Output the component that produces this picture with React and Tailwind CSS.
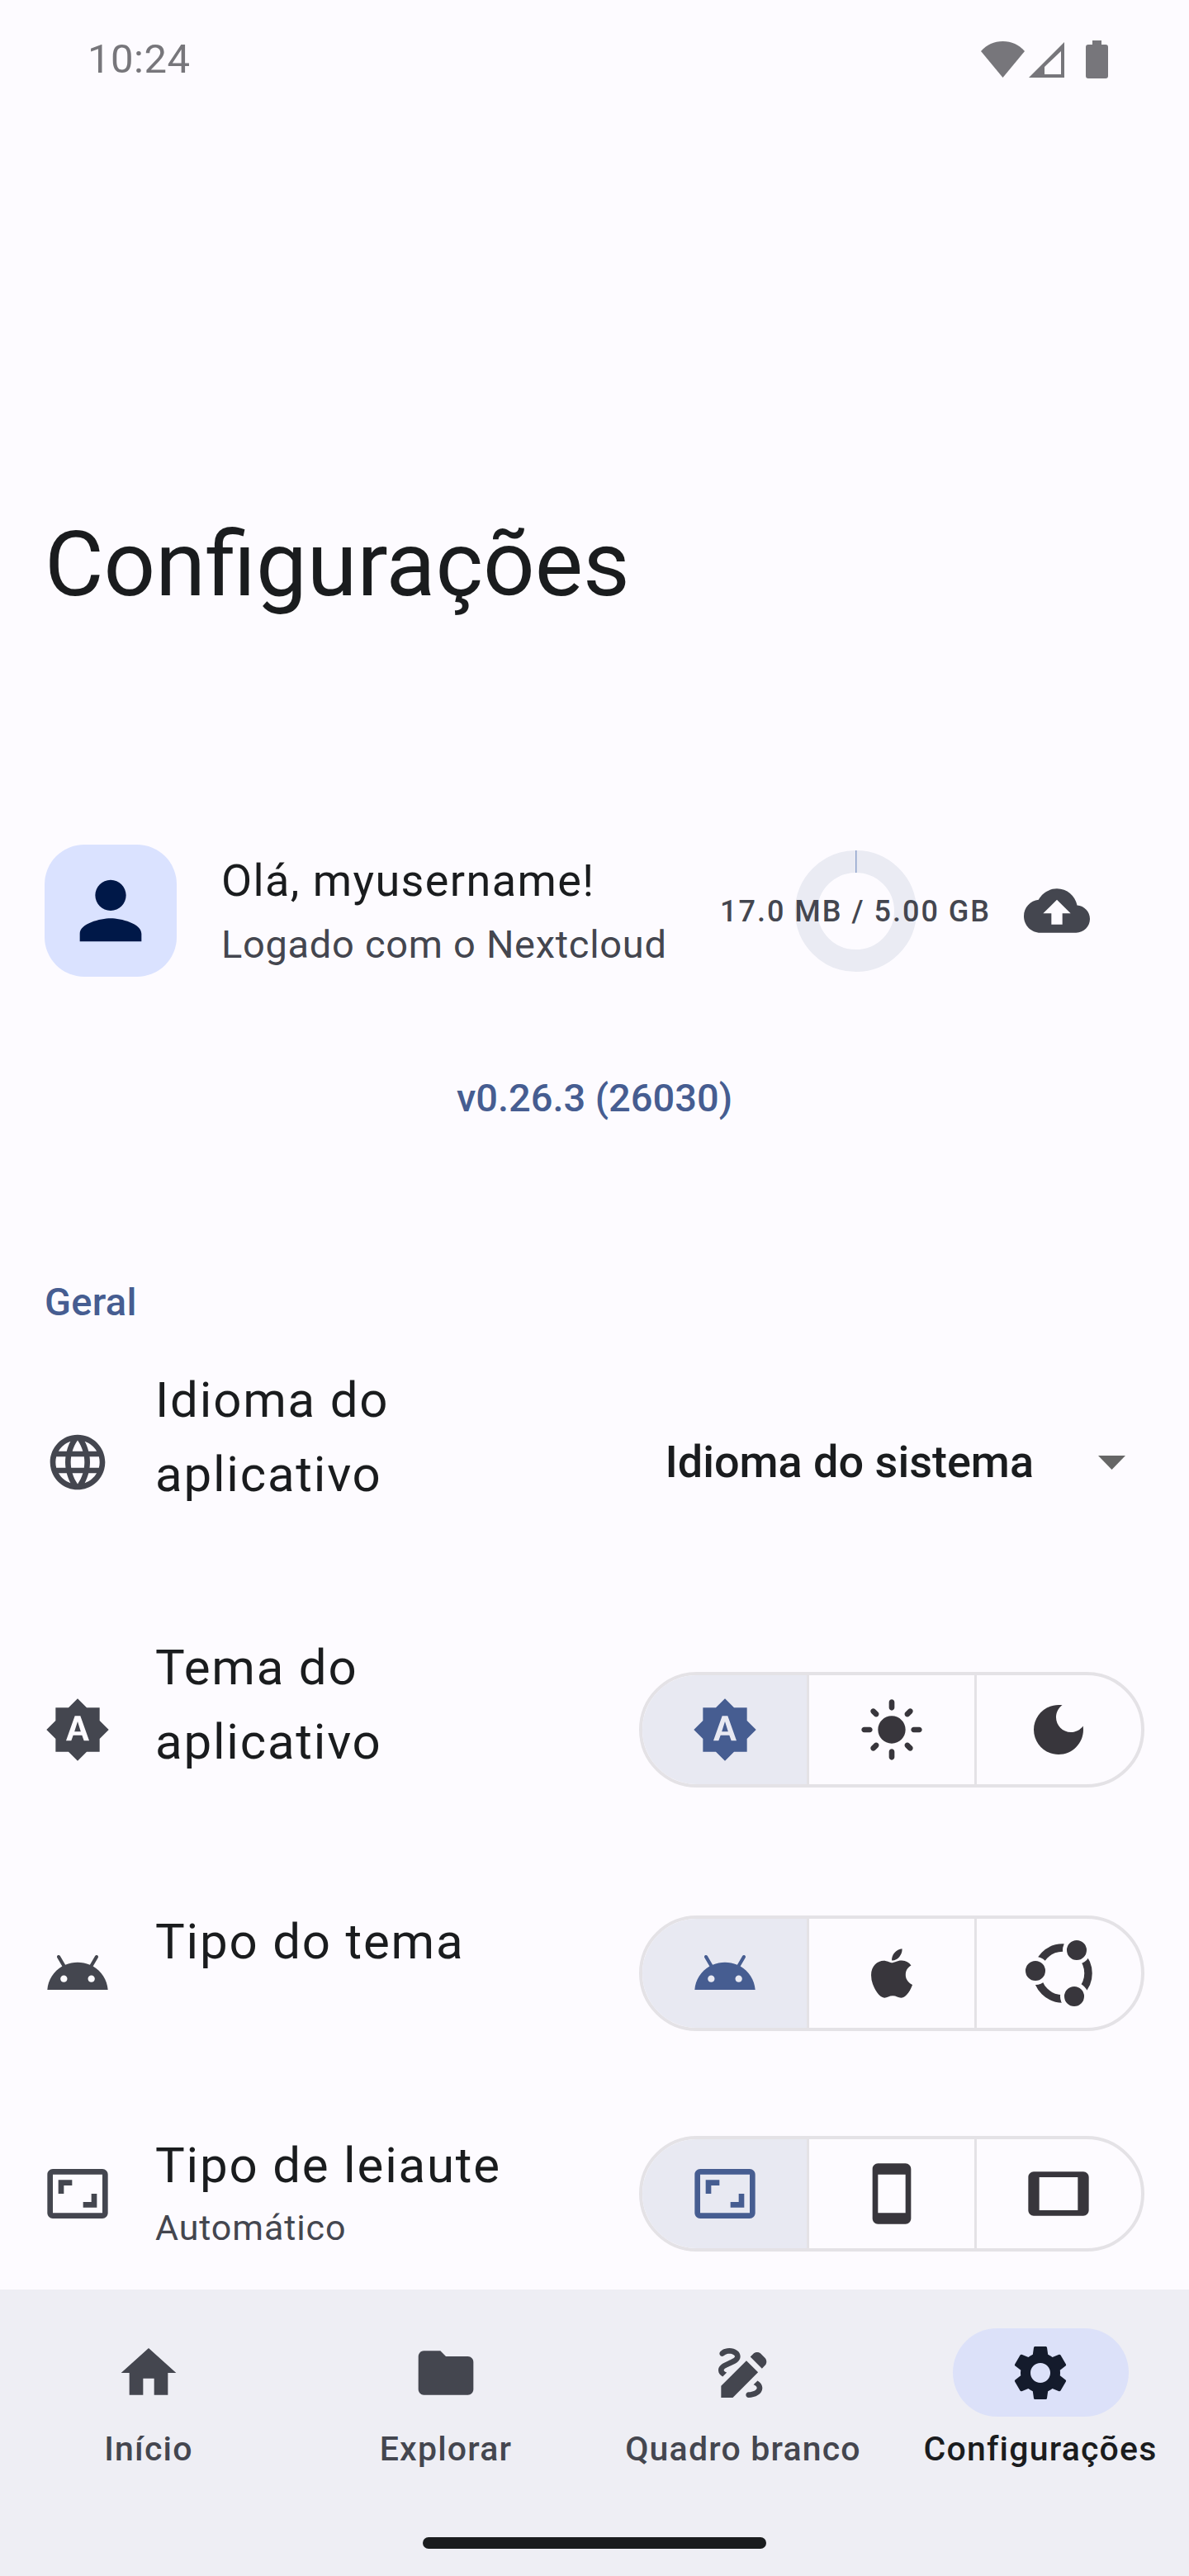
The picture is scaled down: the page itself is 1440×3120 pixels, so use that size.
import { FaApple } from "react-icons/fa";

function Icon({ d, size = 80, className = "" }) {
  return (
    <svg viewBox="0 0 24 24" width={size} height={size} fill="currentColor" className={`shrink-0 ${className}`}>
      <path d={d} />
    </svg>
  );
}

const paths = {
  person: "M12 12c2.21 0 4-1.79 4-4s-1.79-4-4-4-4 1.79-4 4 1.79 4 4 4zm0 2c-2.67 0-8 1.34-8 4v2h16v-2c0-2.66-5.33-4-8-4z",
  cloud: "M19.35 10.04C18.67 6.59 15.64 4 12 4 9.11 4 6.6 5.64 5.35 8.04 2.34 8.36 0 10.91 0 14c0 3.31 2.69 6 6 6h13c2.76 0 5-2.24 5-5 0-2.64-2.05-4.78-4.65-4.96zM14 13v4h-4v-4H7l5-5 5 5h-3z",
  language: "M11.99 2C6.47 2 2 6.48 2 12s4.47 10 9.99 10C17.52 22 22 17.52 22 12S17.52 2 11.99 2zm6.93 6h-2.95c-.32-1.25-.78-2.45-1.38-3.56 1.84.63 3.37 1.91 4.33 3.56zM12 4.04c.83 1.2 1.48 2.53 1.91 3.96h-3.82c.43-1.43 1.08-2.76 1.91-3.96zM4.26 14C4.1 13.36 4 12.69 4 12s.1-1.36.26-2h3.38c-.08.66-.14 1.32-.14 2 0 .68.06 1.34.14 2H4.26zm.82 2h2.95c.32 1.25.78 2.45 1.38 3.56-1.84-.63-3.37-1.9-4.33-3.56zm2.95-8H5.08c.96-1.66 2.49-2.93 4.33-3.56C8.81 5.55 8.35 6.75 8.03 8zM12 19.96c-.83-1.2-1.48-2.53-1.91-3.96h3.82c-.43 1.43-1.08 2.76-1.91 3.96zM14.34 14H9.66c-.09-.66-.16-1.32-.16-2 0-.68.07-1.35.16-2h4.68c.09.65.16 1.32.16 2 0 .68-.07 1.34-.16 2zm.25 5.56c.6-1.11 1.06-2.31 1.38-3.56h2.95c-.96 1.65-2.49 2.93-4.33 3.56zM16.36 14c.08-.66.14-1.32.14-2 0-.68-.06-1.34-.14-2h3.38c.16.64.26 1.31.26 2s-.1 1.36-.26 2h-3.38z",
  auto: "M10.85 12.65h2.3L12 9l-1.15 3.65zM20 8.69V4h-4.69L12 .69 8.69 4H4v4.69L.69 12 4 15.31V20h4.69L12 23.31 15.31 20H20v-4.69L23.31 12 20 8.69zM14.3 16l-.7-2h-3.2l-.7 2H7.8L11 7h2l3.2 9h-1.9z",
  sun: "M12 7c-2.76 0-5 2.24-5 5s2.24 5 5 5 5-2.24 5-5-2.24-5-5-5zM2 13h2c.55 0 1-.45 1-1s-.45-1-1-1H2c-.55 0-1 .45-1 1s.45 1 1 1zm18 0h2c.55 0 1-.45 1-1s-.45-1-1-1h-2c-.55 0-1 .45-1 1s.45 1 1 1zM11 2v2c0 .55.45 1 1 1s1-.45 1-1V2c0-.55-.45-1-1-1s-1 .45-1 1zm0 18v2c0 .55.45 1 1 1s1-.45 1-1v-2c0-.55-.45-1-1-1s-1 .45-1 1zM5.99 4.58c-.39-.39-1.03-.39-1.41 0-.39.39-.39 1.03 0 1.41l1.06 1.06c.39.39 1.03.39 1.41 0s.39-1.03 0-1.41L5.99 4.58zm12.37 12.37c-.39-.39-1.03-.39-1.41 0-.39.39-.39 1.03 0 1.41l1.06 1.06c.39.39 1.03.39 1.41 0 .39-.39.39-1.03 0-1.41l-1.06-1.06zm1.06-10.96c.39-.39.39-1.03 0-1.41-.39-.39-1.03-.39-1.41 0l-1.06 1.06c-.39.39-.39 1.03 0 1.41s1.03.39 1.41 0l1.06-1.06zM7.05 18.36c.39-.39.39-1.03 0-1.41-.39-.39-1.03-.39-1.41 0l-1.06 1.06c-.39.39-.39 1.03 0 1.41s1.03.39 1.41 0l1.06-1.06z",
  moon: "M12 3c-4.97 0-9 4.03-9 9s4.03 9 9 9 9-4.03 9-9c0-.46-.04-.92-.1-1.36-.98 1.37-2.58 2.26-4.4 2.26-2.98 0-5.4-2.42-5.4-5.4 0-1.81.89-3.42 2.26-4.4-.44-.06-.9-.1-1.36-.1z",
  android: "M17.6 9.48l1.84-3.18c.16-.31.04-.69-.26-.85-.29-.15-.65-.06-.83.22l-1.88 3.24c-2.86-1.21-6.08-1.21-8.94 0L5.65 5.67c-.19-.29-.58-.38-.87-.2-.28.18-.37.54-.22.83L6.4 9.48C3.3 11.25 1.28 14.44 1 18h22c-.28-3.56-2.3-6.75-5.4-8.52zM7 15.25c-.69 0-1.25-.56-1.25-1.25s.56-1.25 1.25-1.25 1.25.56 1.25 1.25-.56 1.25-1.25 1.25zm10 0c-.69 0-1.25-.56-1.25-1.25s.56-1.25 1.25-1.25 1.25.56 1.25 1.25-.56 1.25-1.25 1.25z",
  aspect: "M19 12h-2v3h-3v2h5v-5zM7 9h3V7H5v5h2V9zm14-6H3c-1.1 0-2 .9-2 2v14c0 1.1.9 2 2 2h18c1.1 0 2-.9 2-2V5c0-1.1-.9-2-2-2zm0 16.01H3V4.99h18v14.02z",
  phone: "M17 1.01L7 1c-1.1 0-2 .9-2 2v18c0 1.1.9 2 2 2h10c1.1 0 2-.9 2-2V3c0-1.1-.9-1.99-2-1.99zM17 19H7V5h10v14z",
  tablet: "M21 4H3c-1.1 0-1.99.9-1.99 2L1 18c0 1.1.9 2 2 2h18c1.1 0 1.99-.9 1.99-2L23 6c0-1.1-.9-2-2-2zm-2 14H5V6h14v12z",
  home: "M10 20v-6h4v6h5v-8h3L12 3 2 12h3v8z",
  folder: "M10 4H4c-1.1 0-1.99.9-1.99 2L2 18c0 1.1.9 2 2 2h16c1.1 0 2-.9 2-2V8c0-1.1-.9-2-2-2h-8l-2-2z",
  draw: "M18.85 10.39l1.06-1.06c.78-.78.78-2.05 0-2.83L18.5 5.09c-.78-.78-2.05-.78-2.83 0l-1.06 1.06 4.24 4.24zm-5.66-2.83L4 16.76V21h4.24l9.19-9.19-4.24-4.25zM19 17.5c0 2.19-2.54 3.5-5 3.5-.55 0-1-.45-1-1s.45-1 1-1c1.54 0 3-.73 3-1.5 0-.47-.48-.87-1.23-1.2l1.48-1.48c1.07.63 1.75 1.47 1.75 2.68zM4.58 13.35C3.61 12.79 3 12.06 3 11c0-1.8 1.89-2.63 3.56-3.36C7.59 7.18 9 6.56 9 6c0-.41-.78-1-2-1-1.26 0-1.8.61-1.83.64-.35.41-.98.46-1.4.12-.41-.34-.49-.95-.15-1.38C3.73 4.24 4.76 3 7 3s4 1.32 4 3c0 1.87-1.93 2.72-3.64 3.47C6.42 9.88 5 10.5 5 11c0 .31.43.6 1.07.86l-1.49 1.49z",
  settings: "M19.14 12.94c.04-.3.06-.61.06-.94 0-.32-.02-.64-.07-.94l2.03-1.58c.18-.14.23-.41.12-.61l-1.92-3.32c-.12-.22-.37-.29-.59-.22l-2.39.96c-.5-.38-1.03-.7-1.62-.94l-.36-2.54c-.04-.24-.24-.41-.48-.41h-3.84c-.24 0-.43.17-.47.41l-.36 2.54c-.59.24-1.13.57-1.62.94l-2.39-.96c-.22-.08-.47 0-.59.22L2.74 8.87c-.12.21-.08.47.12.61l2.03 1.58c-.05.3-.09.63-.09.94s.02.64.07.94l-2.03 1.58c-.18.14-.23.41-.12.61l1.92 3.32c.12.22.37.29.59.22l2.39-.96c.5.38 1.03.7 1.62.94l.36 2.54c.05.24.24.41.48.41h3.84c.24 0 .44-.17.47-.41l.36-2.54c.59-.24 1.13-.56 1.62-.94l2.39.96c.22.08.47 0 .59-.22l1.92-3.32c.12-.22.07-.47-.12-.61l-2.01-1.58zM12 15.6c-1.98 0-3.6-1.62-3.6-3.6s1.62-3.6 3.6-3.6 3.6 1.62 3.6 3.6-1.62 3.6-3.6 3.6z",
};

// yaru style logo, three dots on a broken ring
function YaruIcon() {
  return (
    <svg viewBox="0 0 80 80" width={80} height={80} className="shrink-0 overflow-visible">
      <circle cx="45" cy="40" r="31" fill="none" stroke="currentColor" strokeWidth="9.5" />
      <g fill="currentColor" stroke="#fdfbff" strokeWidth="5">
        <circle cx="62" cy="12" r="14.5" />
        <circle cx="59" cy="68" r="14.5" />
        <circle cx="12" cy="37" r="14.5" />
      </g>
    </svg>
  );
}

function Segmented({ items }) {
  return (
    <div className="flex h-[140px] w-[612px] shrink-0 overflow-hidden rounded-full border-4 border-[#e4e2e6]">
      {items.map((item, i) => (
        <div
          key={i}
          className={`flex flex-1 items-center justify-center ${i > 0 ? "border-l-[3px] border-[#e4e2e6]" : ""} ${i === 0 ? "bg-[#e8e9f2] text-[#465d91]" : "text-[#38363c]"}`}
        >
          {item}
        </div>
      ))}
    </div>
  );
}

// the text column keeps room for a subtitle, even when there is none
function SettingRow({ icon, title, subtitle, spacer = "h-[60px]", className = "", control }) {
  return (
    <div className={`flex shrink-0 items-center justify-between px-[54px] ${className}`}>
      <div className="flex items-center gap-[54px] text-[#44464f]">
        <Icon d={icon} />
        <div>
          {title.map((line) => (
            <div key={line} className="text-[60px] leading-[90px] tracking-[1.8px] text-[#1a1c1e]">{line}</div>
          ))}
          {subtitle ? (
            <div className="pb-[8px] text-[43px] leading-[60px] tracking-[0.9px] text-[#44464f]">{subtitle}</div>
          ) : (
            <div className={spacer} />
          )}
        </div>
      </div>
      {control}
    </div>
  );
}

function NavItem({ icon, label, active }) {
  return (
    <div className="flex w-[360px] flex-col items-center">
      <div className={`flex h-[107px] w-[213px] items-center justify-center rounded-full ${active ? "bg-[#dce1f9] text-[#141b2c]" : "text-[#44464f]"}`}>
        <Icon d={icon} size={80} />
      </div>
      <div className={`mt-[12px] whitespace-nowrap text-[41px] font-medium leading-[54px] tracking-[1.2px] ${active ? "text-[#1a1c1e]" : "text-[#44464f]"}`}>
        {label}
      </div>
    </div>
  );
}

export default function App() {
  return (
    <div className="flex h-[3120px] w-[1440px] flex-col overflow-hidden bg-[#fdfbff] font-['Roboto',sans-serif]">
      <div className="flex h-[144px] shrink-0 items-start justify-between pl-[106px] pr-[98px] pt-[46px] text-[#77767b]">
        <span className="text-[49px] leading-[52px] tracking-[0.5px]">10:24</span>
        <div className="mt-[3px] flex items-center gap-[5px]">
          <svg viewBox="0 0 53 44" width="53" height="44" fill="currentColor"><path d="M0 12C7 4 16 0 26.5 0S46 4 53 12L26.5 44z" /></svg>
          <svg viewBox="0 0 43 44" width="43" height="44" fill="currentColor" fillRule="evenodd" className="mr-[21px]"><path d="M43 1V44H0zM39 12V40H19V31z" /></svg>
          <svg viewBox="0 0 27 46" width="27" height="46" fill="currentColor"><path d="M8 0h11v5h5a3 3 0 0 1 3 3v35a3 3 0 0 1-3 3H3a3 3 0 0 1-3-3V8a3 3 0 0 1 3-3h5z" /></svg>
        </div>
      </div>

      <h1 className="mt-[478px] shrink-0 pl-[54px] text-[110px] font-normal leading-[124px] text-[#1a1c1e]">Configurações</h1>

      <div className="mt-[277px] flex shrink-0 items-center pl-[54px]">
        <div className="flex h-[160px] w-[160px] items-center justify-center rounded-[48px] bg-[#dae2ff] text-[#001848]">
          <Icon d={paths.person} size={112} />
        </div>
        <div className="ml-[54px] w-[606px] pb-[1px]">
          <div className="text-[54px] leading-[72px] tracking-[1.4px] text-[#1a1c1e]">Olá, myusername!</div>
          <div className="mt-[11px] text-[47px] leading-[60px] tracking-[0.7px] text-[#44464f]">Logado com o Nextcloud</div>
        </div>
        <div className="relative flex h-[147px] w-[324px] items-center justify-center">
          <svg viewBox="0 0 147 147" width="147" height="147" className="absolute left-[89px] top-0">
            <circle cx="73.5" cy="73.5" r="60" fill="none" stroke="#eaebf3" strokeWidth="27" />
            <rect x="73" y="0" width="1.5" height="27" fill="#8fa3cc" />
          </svg>
          <span className="relative mt-[2px] whitespace-nowrap text-[36px] font-medium leading-[48px] tracking-[2px] text-[#44464f]">17.0 MB / 5.00 GB</span>
        </div>
        <div className="ml-[42px] text-[#44464f]">
          <Icon d={paths.cloud} size={80} />
        </div>
      </div>

      <div className="mt-[117px] shrink-0 text-center text-[47px] font-medium leading-[60px] text-[#465d91]">v0.26.3 (26030)</div>

      <div className="mt-[189px] shrink-0 pl-[54px] text-[47px] font-medium leading-[56px] tracking-[0.3px] text-[#465d91]">Geral</div>

      <SettingRow
        className="mt-[46px]"
        icon={paths.language}
        title={["Idioma do", "aplicativo"]}
        control={
          <div className="flex items-center">
            <span className="text-[54px] font-medium leading-[64px] text-[#1a1c1e]">Idioma do sistema</span>
            <svg viewBox="7 10 10 5" width="33" height="17" fill="#666666" preserveAspectRatio="none" className="ml-[78px] mr-[23px]"><path d="M7 10l5 5 5-5z" /></svg>
          </div>
        }
      />

      <SettingRow
        className="mt-[84px]"
        icon={paths.auto}
        title={["Tema do", "aplicativo"]}
        control={
          <Segmented items={[<Icon key="a" d={paths.auto} />, <Icon key="b" d={paths.sun} />, <Icon key="c" d={paths.moon} />]} />
        }
      />

      <SettingRow
        className="mt-[92px]"
        icon={paths.android}
        title={["Tipo do tema"]}
        spacer="h-[76px]"
        control={
          <Segmented items={[<Icon key="a" d={paths.android} />, <FaApple key="b" size={68} />, <YaruIcon key="c" />]} />
        }
      />

      <SettingRow
        className="mt-[105px]"
        icon={paths.aspect}
        title={["Tipo de leiaute"]}
        subtitle="Automático"
        control={
          <Segmented items={[<Icon key="a" d={paths.aspect} />, <Icon key="b" d={paths.phone} />, <Icon key="c" d={paths.tablet} />]} />
        }
      />

      <div className="mt-auto flex h-[347px] shrink-0 flex-col bg-[#eeeef4]">
        <div className="flex pt-[47px]">
          <NavItem icon={paths.home} label="Início" />
          <NavItem icon={paths.folder} label="Explorar" />
          <NavItem icon={paths.draw} label="Quadro branco" />
          <NavItem icon={paths.settings} label="Configurações" active />
        </div>
        <div className="mx-auto mt-[80px] h-[14px] w-[416px] rounded-full bg-[#1a1c1e]" />
      </div>
    </div>
  );
}
